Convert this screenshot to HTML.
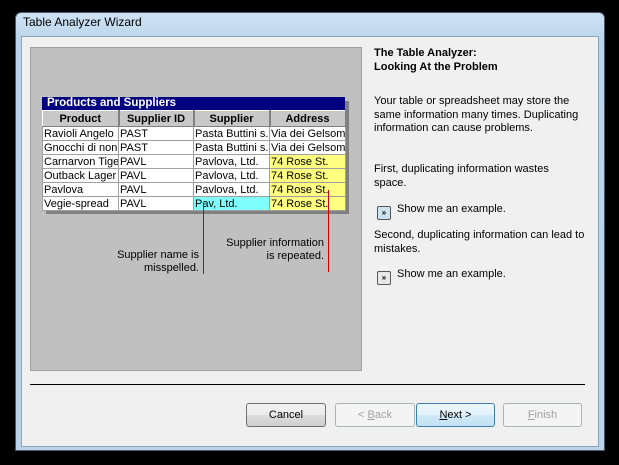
<!DOCTYPE html>
<html><head><style>
*{margin:0;padding:0;box-sizing:border-box}
body{width:619px;height:465px;background:#000;position:relative;overflow:hidden;font-family:"Liberation Sans",sans-serif;font-size:11px;color:#000}
.abs{position:absolute}
.frame{left:15px;top:12px;width:590px;height:439px;background:linear-gradient(#cfe3f5,#b9d3ea 30px,#bcd4ea);border:1px solid #4a5a6a;border-radius:6px 6px 0 0}
.client{left:21px;top:36px;width:578px;height:411px;background:#f0f0f0;border:1px solid #8da3b8}
.panel{left:30px;top:47px;width:332px;height:324px;background:#c0c0c0;border:1px solid #a0a0a0}
.shadow{left:46px;top:101px;width:303px;height:113px;background:#808080}
table{border-collapse:collapse;position:absolute;left:42px;top:110px;width:303px;table-layout:fixed}
td{height:14px;border:1px solid #a0a0a0;background:#fff;font-size:11px;white-space:nowrap;overflow:hidden;padding:0 1px;line-height:12px}
th{height:16px;background:#c8c8c8;border:1px solid #fff;border-right:2px solid #808080;border-bottom:1px solid #808080;font-size:11px;font-weight:bold}
.y{background:#ffff80}.c{background:#80ffff}
.btn{top:403px;height:24px;border:1px solid #707070;border-radius:3px;background:linear-gradient(#f2f2f2,#ebebeb 50%,#dddddd 50%,#cfcfcf);text-align:center;line-height:22px;font-size:11px}
.dis{border-color:#adb2b5;background:#f4f4f4;color:#a0a0a0}
.ico{width:14px;height:14px;border:1px solid #555;border-radius:2px;background:#e8e8e8;font-size:8px;text-align:center;line-height:11px;font-weight:bold}
.red{width:1px;background:#d00000;z-index:5}
</style></head><body>
<div class="abs frame"></div>
<div class="abs" style="left:23px;top:15px;font-size:12px">Table Analyzer Wizard</div>
<div class="abs client"></div>
<div class="abs panel"></div>
<div class="abs shadow"></div>
<div class="abs" style="left:42px;top:97px;width:303px;height:14px;background:#000080;color:#fff;font-weight:bold;font-size:11.5px;padding-left:5px;line-height:13px">Products and Suppliers</div>
<table>
<colgroup><col style="width:76px"><col style="width:75px"><col style="width:76px"><col style="width:76px"></colgroup>
<tr><th>Product</th><th>Supplier ID</th><th>Supplier</th><th>Address</th></tr>
<tr><td>Ravioli Angelo</td><td>PAST</td><td>Pasta Buttini s.r.l.</td><td>Via dei Gelsomini</td></tr>
<tr><td>Gnocchi di nonna</td><td>PAST</td><td>Pasta Buttini s.r.l.</td><td>Via dei Gelsomini</td></tr>
<tr><td>Carnarvon Tigers</td><td>PAVL</td><td>Pavlova, Ltd.</td><td class="y">74 Rose St.</td></tr>
<tr><td>Outback Lager</td><td>PAVL</td><td>Pavlova, Ltd.</td><td class="y">74 Rose St.</td></tr>
<tr><td>Pavlova</td><td>PAVL</td><td>Pavlova, Ltd.</td><td class="y">74 Rose St.</td></tr>
<tr><td>Vegie-spread</td><td>PAVL</td><td class="c">Pav, Ltd.</td><td class="y">74 Rose St.</td></tr>
</table>
<div class="abs red" style="left:203px;top:203px;height:71px"></div>
<div class="abs red" style="left:328px;top:190px;height:82px"></div>
<div class="abs" style="right:420px;top:249px;text-align:right;line-height:13px">Supplier name is<br>misspelled.</div>
<div class="abs" style="right:295px;top:237px;text-align:right;line-height:13px">Supplier information<br>is repeated.</div>
<div class="abs" style="left:374px;top:46px;font-weight:bold;line-height:14px">The Table Analyzer:<br>Looking At the Problem</div>
<div class="abs" style="left:374px;top:95px;line-height:13.5px">Your table or spreadsheet may store the<br>same information many times. Duplicating<br>information can cause problems.</div>
<div class="abs" style="left:374px;top:163px;line-height:13.5px">First, duplicating information wastes<br>space.</div>
<div class="abs ico" style="left:377px;top:206px;background:#cde4ee">»</div>
<div class="abs" style="left:397px;top:203px">Show me an example.</div>
<div class="abs" style="left:374px;top:229px;line-height:13.5px">Second, duplicating information can lead to<br>mistakes.</div>
<div class="abs ico" style="left:377px;top:271px">»</div>
<div class="abs" style="left:397px;top:268px">Show me an example.</div>
<div class="abs" style="left:30px;top:384px;width:555px;height:1px;background:#000"></div>
<div class="abs btn" style="left:246px;width:80px">Cancel</div>
<div class="abs btn dis" style="left:335px;width:80px">&lt; <u>B</u>ack</div>
<div class="abs btn" style="left:416px;width:79px;border-color:#3c7fb1;background:linear-gradient(#eef7fd,#e3f2fc 50%,#d0e9f8 50%,#c2e2f5)"><u>N</u>ext &gt;</div>
<div class="abs btn dis" style="left:503px;width:79px"><u>F</u>inish</div>
</body></html>
